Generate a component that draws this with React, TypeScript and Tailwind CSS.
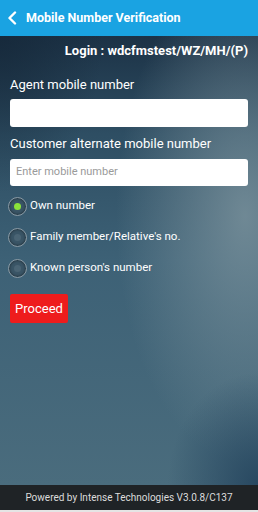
import * as React from 'react';

const options = ['Own number', "Family member/Relative's no.", "Known person's number"];

function Radio({ checked }: { checked: boolean }) {
  return (
    <span className="flex h-[19px] w-[19px] items-center justify-center rounded-full border border-[#8a9aa4] bg-[#3a5566] shadow-[inset_0_0_3px_rgba(0,0,0,0.6)]">
      {checked ? (
        <span className="h-[7px] w-[7px] rounded-full bg-[#8be23a]" />
      ) : (
        <span className="h-[7px] w-[7px] rounded-full bg-[#4a6474]" />
      )}
    </span>
  );
}

export default function App() {
  const [selected, setSelected] = React.useState(0);

  return (
    <div className="flex h-[512px] w-[258px] flex-col font-['Roboto',sans-serif] text-white">
      <div className="flex h-[36px] items-center gap-[8px] bg-[#1aa3e2] px-[7px]">
        <svg width="11" height="14" viewBox="0 0 11 14" fill="none">
          <path d="M8 1.5 L2.5 7 L8 12.5" stroke="white" strokeWidth="2.4" strokeLinecap="round" strokeLinejoin="round" />
        </svg>
        <span className="text-[12.5px] font-bold">Mobile Number Verification</span>
      </div>

      <div className="relative flex-1 overflow-hidden bg-[linear-gradient(180deg,#1c3246_0%,#2e4e63_22%,#3d6176_50%,#4a6c7d_100%)]">
        <div className="absolute inset-0 bg-[radial-gradient(ellipse_50%_55%_at_95%_40%,rgba(125,148,158,0.8),rgba(125,148,158,0)_100%)]" />
        <div className="absolute inset-0 bg-[radial-gradient(ellipse_35%_25%_at_100%_100%,rgba(38,70,95,0.95),rgba(38,70,95,0)_100%)]" />
        <div className="absolute inset-0 bg-[radial-gradient(ellipse_40%_35%_at_0%_0%,rgba(20,38,55,0.7),rgba(20,38,55,0)_100%)]" />

        <div className="relative flex flex-col px-[10px]">
          <div className="mt-[7px] text-right text-[13px] font-bold leading-[16px]">Login : wdcfmstest/WZ/MH/(P)</div>

          <div className="mt-[18px] text-[13px] leading-[16px]">Agent mobile number</div>
          <div className="mt-[6px] h-[28px] rounded-[3px] bg-white" />

          <div className="mt-[9px] text-[13px] leading-[16px]">Customer alternate mobile number</div>
          <div className="mt-[7px] flex h-[27px] items-center rounded-[3px] bg-white px-[6px] text-[11px] text-[#9a9a9a]">
            Enter mobile number
          </div>

          <div className="-ml-[2px] mt-[10px] flex flex-col gap-[11px]">
            {options.map((o, i) => (
              <button key={o} onClick={() => setSelected(i)} className="flex h-[20px] items-center gap-[3px] text-left">
                <Radio checked={selected === i} />
                <span className="text-[11.5px]">{o}</span>
              </button>
            ))}
          </div>

          <button className="mt-[16px] flex h-[29px] w-[58px] items-center justify-center rounded-[2px] bg-[#ee1c1c] text-[13px]">
            Proceed
          </button>
        </div>
      </div>

      <div className="flex h-[25px] items-center justify-center bg-[#1f2326] text-[10px] text-[#dcdcdc]">
        Powered by Intense Technologies V3.0.8/C137
      </div>
      <div className="h-[2px] bg-[#e5e5e5]" />
    </div>
  );
}
